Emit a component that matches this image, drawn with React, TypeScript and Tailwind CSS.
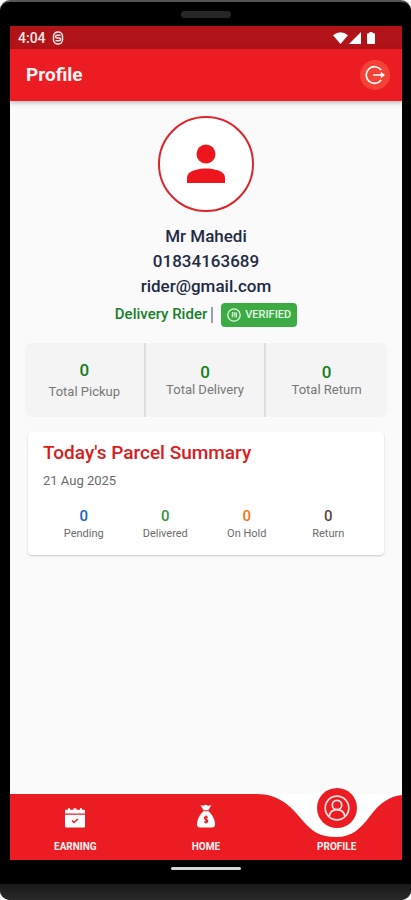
import clsx from "clsx";

interface Stat {
  label: string;
  value: number;
  color: string;
}

const totals: Stat[] = [
  { label: "Total Pickup", value: 0, color: "text-[#14801c]" },
  { label: "Total Delivery", value: 0, color: "text-[#14801c]" },
  { label: "Total Return", value: 0, color: "text-[#14801c]" },
];

const summary: Stat[] = [
  { label: "Pending", value: 0, color: "text-[#1a62c4]" },
  { label: "Delivered", value: 0, color: "text-[#3d9142]" },
  { label: "On Hold", value: 0, color: "text-[#f0761a]" },
  { label: "Return", value: 0, color: "text-[#5d4541]" },
];

const StatusBar = () => (
  <div className="flex h-[23px] items-center justify-between bg-[#b01318] pl-2 pr-6 text-[#fbe9e9]">
    <div className="flex items-center gap-1.5">
      <span className="text-sm font-medium">4:04</span>
      <svg viewBox="0 0 12 14" className="h-3.5 w-3" fill="none" stroke="currentColor" strokeWidth="1.5">
        <path d="M6 1a4.5 4.2 0 0 1 4.5 4.2V9A4.5 4.2 0 0 1 6 13 4.5 4.2 0 0 1 1.5 9V5.2A4.5 4.2 0 0 1 6 1Z" />
        <path d="M8.5 4.3H5a1.3 1.3 0 0 0 0 2.7h2.2a1.3 1.3 0 0 1 0 2.7H3.5" />
      </svg>
    </div>
    <svg viewBox="0 0 46 14" className="h-3.5 w-11.5" fill="#fff">
      <path d="M1 4.2Q8.5-1.500 16 4.200L8.500 13Z" />
      <path d="M29 1v12H17Z" />
      <path d="M37.5 1h3v1.300h1.500q1 0 1 1V12q0 1-1 1h-6q-1 0-1-1V3.300q0-1 1-1h1.500Z" />
    </svg>
  </div>
);

const Header = () => (
  <header className="relative flex h-13 items-center justify-between bg-[#ec1c23] pl-4 pr-3 shadow-[0_2px_4px_rgba(0,0,0,0.25)]">
    <h1 className="text-[19px] font-bold text-[#fff3f3]">Profile</h1>
    <button aria-label="Log out" className="flex size-[30px] items-center justify-center rounded-full bg-[#f44336]">
      <svg viewBox="0 0 22 22" className="size-[22px]" fill="none" stroke="#fff" strokeWidth="1.7">
        <path d="M17.2 6.1A8.3 8.3 0 1 0 17.2 15.9" />
        <path d="M9 11h9" />
        <path d="M16.8 7.8 21 11l-4.2 3.2Z" fill="#fff" stroke="none" />
      </svg>
    </button>
  </header>
);

const UserInfo = () => (
  <section className="flex flex-col items-center text-[17px] font-medium leading-[25px] text-[#1f2a44]">
    <div className="mb-3 flex size-24 items-center justify-center rounded-full border-2 border-[#dc2429] bg-white">
      <svg viewBox="0 0 40 40" className="size-10" fill="#ee161d">
        <circle cx="20" cy="10" r="9.5" />
        <path d="M1 39v-5.5C1 27 12 24.500 20 24.500S39 27 39 33.500V39Z" />
      </svg>
    </div>
    <p>Mr Mahedi</p>
    <p>01834163689</p>
    <p>rider@gmail.com</p>
    <div className="mt-[3px] flex items-center gap-1">
      <span className="text-[15px] text-[#17802a]">Delivery Rider</span>
      <span className="h-4 w-0.5 bg-gray-400" />
      <span className="ml-1 flex h-6 items-center gap-1 rounded-sm bg-[#3cab43] px-1.5 text-[11px] text-[#e5f8e5]">
        <svg viewBox="0 0 14 14" className="size-3.5" fill="none" stroke="currentColor">
          <circle cx="7" cy="7" r="6.2" strokeWidth="1.3" />
          <path d="M5.3 9.500v-5h1.200a1.200 1.200 0 0 1 0 2.500H5.300M8 4.500v5M9.500 4.500v5" />
        </svg>
        VERIFIED
      </span>
    </div>
  </section>
);

const Totals = () => (
  <section className="mx-[15px] mt-4 grid grid-cols-3 divide-x-2 divide-[#dedede] overflow-hidden rounded-md bg-[#f4f4f4]">
    {totals.map((item, index) => (
      <div key={item.label} className={clsx("flex h-[74px] flex-col items-center justify-center pt-0.5", index === 0 && "gap-1")}>
        <span className={clsx("text-[17px] font-medium leading-[18px]", item.color)}>{item.value}</span>
        <span className="text-[13px] leading-[18px] text-[#777]">{item.label}</span>
      </div>
    ))}
  </section>
);

const ParcelSummary = () => (
  <section className="mx-[18px] mt-[15px] rounded-sm bg-white px-[15px] pb-3 pt-[7px] shadow-[0_1px_2px_rgba(0,0,0,0.2)]">
    <h2 className="text-[19px] font-medium leading-7 text-[#dc1a20]">Today's Parcel Summary</h2>
    <p className="mt-1 text-[13px] leading-5 text-[#6b6b6b]">21 Aug 2025</p>
    <div className="mt-4 grid grid-cols-4">
      {summary.map((item) => (
        <div key={item.label} className="flex flex-col items-center">
          <span className={clsx("text-[15px] font-medium leading-[18px]", item.color)}>{item.value}</span>
          <span className="text-[11px] leading-[18px] text-[#6b6b6b]">{item.label}</span>
        </div>
      ))}
    </div>
  </section>
);

const navLink = "relative flex flex-col items-center justify-end gap-3 pb-1.5";

const BottomNav = () => (
  <nav className="relative grid h-[66px] grid-cols-3 grid-rows-1 text-[10px] font-bold leading-[14px] text-[#fff3f3]">
    {/* bar shape with the dip under the active tab */}
    <svg viewBox="0 0 393 66" preserveAspectRatio="none" className="absolute inset-0 size-full" fill="#ec1c23">
      <path d="M248 0H393V66H248Z" fill="#fff" />
      <path d="M0 0H248C268 0 281 11 292 25 303 38 311 43 327 43S351 35 361 22C370 10 380 2 393 1V66H0Z" />
    </svg>
    <a href="#earning" className={navLink}>
      <svg viewBox="0 0 22 20" className="h-5 w-[22px]" fill="#fff">
        <path d="M1 5.5V2.500q0-.8.8-.8H4V.2h2v1.500h3.500V.2h3v1.500H16V.2h2v1.500h2.200q.8 0 .8.8v3Z" />
        <path d="M1 6.800h20v11.700q0 1-1 1H2q-1 0-1-1Z" />
        <path d="m8 12.500 2 2 4-3.500" fill="none" stroke="#ec1c23" strokeWidth="1.6" />
      </svg>
      EARNING
    </a>
    <a href="#home" className={navLink}>
      <svg viewBox="0 0 20 24" className="h-6 w-5" fill="#fff">
        <path d="M4.500 1.200q2.500.8 4 0t3 .3q2 .6 4-.7l-3.200 5.400H7.500Z" />
        <path d="M7.300 7.300h5.400C16.500 11 19 16 19 20.500q0 3-3 3H4q-3 0-3-3c0-4.500 2.500-9.500 6.300-13.200Z" />
        <path d="M11.600 13.700q-.5-1-1.600-1-1.500 0-1.500 1.300t1.600 1.500q1.600.2 1.600 1.600T10 18.500q-1.200 0-1.800-1M10 11.600v8" fill="none" stroke="#ec1c23" strokeWidth="1.3" />
      </svg>
      HOME
    </a>
    <a href="#profile" className={navLink} aria-current="page">
      <span className="flex size-10 shrink-0 items-center justify-center rounded-full bg-[#ec1c23]">
        <svg viewBox="0 0 26 26" className="size-[26px]" fill="none" stroke="#ffe3e3" strokeWidth="1.7">
          <circle cx="13" cy="13" r="11.8" />
          <circle cx="13" cy="10" r="4.7" />
          <path d="M5 21.500c1-4.500 4-6.800 8-6.800s7 2.300 8 6.800" />
        </svg>
      </span>
      PROFILE
    </a>
  </nav>
);

export default function App() {
  return (
    <div className="min-h-screen bg-white font-[Roboto,sans-serif]">
      <div className="flex min-h-screen flex-col overflow-hidden rounded-[10px] border-t-2 border-[#555] bg-black">
        <div className="flex h-6 items-center justify-center">
          <span className="h-[7px] w-[50px] rounded-full bg-[#262626]" />
        </div>
        <div className="ml-2.5 mr-[9px] flex grow flex-col bg-[#fafafa]">
          <StatusBar />
          <Header />
          <main className="grow pt-[15px]">
            <UserInfo />
            <Totals />
            <ParcelSummary />
          </main>
          <BottomNav />
        </div>
        <div className="flex h-10 flex-col items-center justify-between">
          <span className="mt-[7px] h-[3px] w-[70px] rounded-full bg-[#d5d5d5]" />
          <span className="h-4 w-full bg-linear-to-b from-[#181818] to-[#2a2a2a]" />
        </div>
      </div>
    </div>
  );
}
